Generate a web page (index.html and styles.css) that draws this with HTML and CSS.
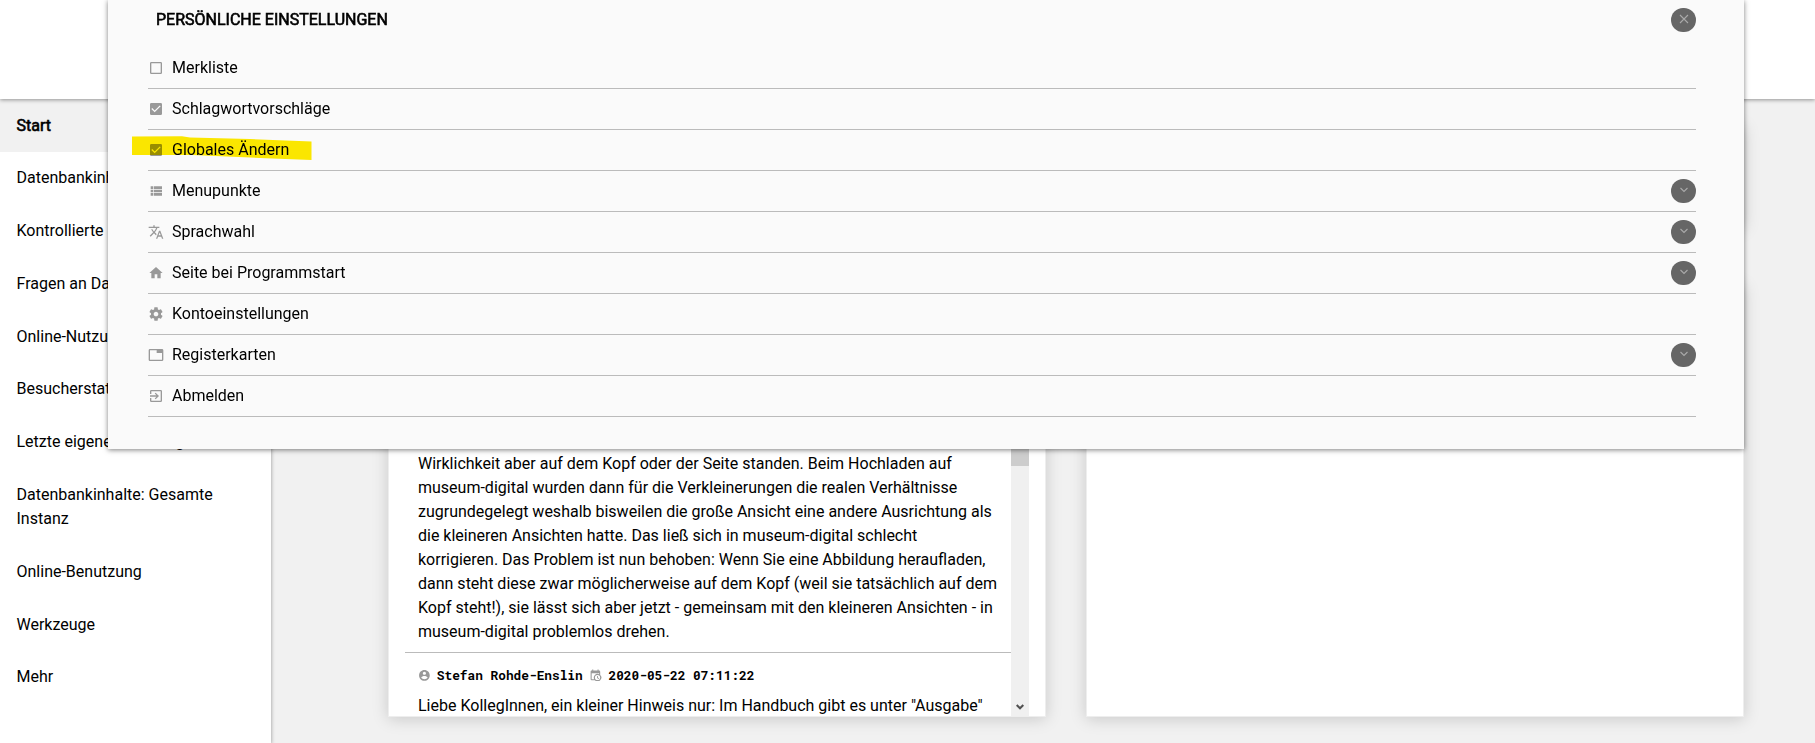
FILE: index.html
```html
<!DOCTYPE html>
<html lang="de">
<head>
<meta charset="utf-8">
<title>museum-digital</title>
<link rel="stylesheet" href="styles.css">
</head>
<body>
<header class="topbar"></header>
<div class="page">
  <nav class="sidebar">
    <a class="nav-item active">Start</a>
    <a class="nav-item">Datenbankinhalte</a>
    <a class="nav-item">Kontrollierte Listen</a>
    <a class="nav-item">Fragen an Datenbank</a>
    <a class="nav-item">Online-Nutzung</a>
    <a class="nav-item">Besucherstatistik</a>
    <a class="nav-item">Letzte eigene Änderungen</a>
    <a class="nav-item">Datenbankinhalte: Gesamte Instanz</a>
    <a class="nav-item">Online-Benutzung</a>
    <a class="nav-item">Werkzeuge</a>
    <a class="nav-item">Mehr</a>
  </nav>
  <main class="content">
    <section class="card summary"></section>
    <section class="card news">
      <div class="feed">
        <p class="post">Wirklichkeit aber auf dem Kopf oder der Seite standen. Beim Hochladen auf<br>museum-digital wurden dann für die Verkleinerungen die realen Verhältnisse<br>zugrundegelegt weshalb bisweilen die große Ansicht eine andere Ausrichtung als<br>die kleineren Ansichten hatte. Das ließ sich in museum-digital schlecht<br>korrigieren. Das Problem ist nun behoben: Wenn Sie eine Abbildung heraufladen,<br>dann steht diese zwar möglicherweise auf dem Kopf (weil sie tatsächlich auf dem<br>Kopf steht!), sie lässt sich aber jetzt - gemeinsam mit den kleineren Ansichten - in<br>museum-digital problemlos drehen.</p>
        <div class="meta">
          <svg class="meta-icon" viewBox="0 0 24 24"><path d="M12 2C6.480 2 2 6.480 2 12s4.480 10 10 10 10-4.480 10-10S17.520 2 12 2zm0 3c1.660 0 3 1.340 3 3s-1.340 3-3 3-3-1.340-3-3 1.340-3 3-3zm0 14.200c-2.500 0-4.710-1.280-6-3.220.030-1.990 4-3.080 6-3.080 1.990 0 5.970 1.090 6 3.080-1.290 1.940-3.500 3.220-6 3.220z"/></svg>
          <span class="author">Stefan Rohde-Enslin</span>
          <svg class="meta-icon" viewBox="0 0 24 24"><path d="M15 13h1.500v2.820l2.440 1.410-.750 1.300L15 16.690V13zm4-5H5v11h4.670A7 7 0 0 1 19 9.670V8zM5 21a2 2 0 0 1-2-2V5c0-1.110.890-2 2-2h1V1h2v2h8V1h2v2h1a2 2 0 0 1 2 2v6.100A7 7 0 0 1 11.100 21H5zm11-9.850A4.850 4.850 0 1 0 16 20.850 4.850 4.850 0 0 0 16 11.150z"/></svg>
          <span class="date">2020-05-22 07:11:22</span>
        </div>
        <p class="post next">Liebe KollegInnen, ein kleiner Hinweis nur: Im Handbuch gibt es unter "Ausgabe"</p>
      </div>
      <div class="scrollbar"><div class="thumb"></div><svg class="scroll-arrow" viewBox="0 0 8 6"><path d="M.700 1 4 4.300 7.300 1"/></svg></div>
    </section>
    <section class="card empty"></section>
  </main>
</div>
<div class="dialog">
  <div class="dialog-head"><h2>PERSÖNLICHE EINSTELLUNGEN</h2><span class="round"><svg viewBox="0 0 12 12"><path d="M2 2l8 8M10 2l-8 8"/></svg></span></div>
  <ul class="options">
    <li><svg class="ico" viewBox="0 0 24 24"><path d="M19 5v14H5V5h14m0-2H5a2 2 0 0 0-2 2v14a2 2 0 0 0 2 2h14a2 2 0 0 0 2-2V5a2 2 0 0 0-2-2z"/></svg>Merkliste</li>
    <li><svg class="ico" viewBox="0 0 24 24"><path d="M19 3H5a2 2 0 0 0-2 2v14a2 2 0 0 0 2 2h14a2 2 0 0 0 2-2V5a2 2 0 0 0-2-2zm-9 14l-5-5 1.410-1.410L10 14.170l7.590-7.590L19 8l-9 9z"/></svg>Schlagwortvorschläge</li>
    <li><svg class="ico" viewBox="0 0 24 24"><path d="M19 3H5a2 2 0 0 0-2 2v14a2 2 0 0 0 2 2h14a2 2 0 0 0 2-2V5a2 2 0 0 0-2-2zm-9 14l-5-5 1.410-1.410L10 14.170l7.590-7.590L19 8l-9 9z"/></svg>Globales Ändern
      <svg class="marker" viewBox="0 0 180 25"><path d="M0 .500L50 .200 58 1.500 118 3 179.500 5.500V24L140 22.500 60 19 0 19z"/></svg></li>
    <li><svg class="ico" viewBox="0 0 24 24"><path d="M4 14h4v-4H4v4zm0 5h4v-4H4v4zM4 9h4V5H4v4zm5 5h12v-4H9v4zm0 5h12v-4H9v4zM9 5v4h12V5H9z"/></svg>Menupunkte<span class="round"><svg viewBox="0 0 12 12"><path d="M2.500 4L6 7.500 9.500 4"/></svg></span></li>
    <li><svg class="ico" viewBox="0 0 24 24"><path d="M12.870 15.070l-2.540-2.510.030-.030A17.500 17.500 0 0 0 14.070 6H17V4h-7V2H8v2H1v2h11.170C11.500 7.920 10.440 9.750 9 11.350 8.070 10.320 7.300 9.190 6.690 8h-2c.730 1.630 1.730 3.170 2.980 4.560l-5.090 5.020L4 19l5-5 3.110 3.110.760-2.040zM18.500 10h-2L12 22h2l1.120-3h4.750L21 22h2l-4.500-12zm-2.620 7l1.620-4.330L19.120 17h-3.240z"/></svg>Sprachwahl<span class="round"><svg viewBox="0 0 12 12"><path d="M2.500 4L6 7.500 9.500 4"/></svg></span></li>
    <li><svg class="ico" viewBox="0 0 24 24"><path d="M10 20v-6h4v6h5v-8h3L12 3 2 12h3v8z"/></svg>Seite bei Programmstart<span class="round"><svg viewBox="0 0 12 12"><path d="M2.500 4L6 7.500 9.500 4"/></svg></span></li>
    <li><svg class="ico" viewBox="0 0 24 24"><path d="M19.430 12.980c.040-.320.070-.640.070-.980s-.030-.660-.070-.980l2.110-1.650c.190-.150.240-.420.120-.640l-2-3.460c-.120-.220-.390-.300-.610-.220l-2.490 1c-.520-.400-1.080-.730-1.690-.980l-.380-2.650A.488.488 0 0 0 14 2h-4c-.250 0-.460.180-.490.420l-.380 2.650c-.610.250-1.170.590-1.690.980l-2.490-1c-.230-.090-.490 0-.610.220l-2 3.460c-.130.220-.070.490.120.640l2.110 1.650c-.040.320-.070.650-.070.980s.030.660.070.980l-2.110 1.650c-.190.150-.240.420-.120.640l2 3.460c.120.220.390.300.610.220l2.490-1c.520.400 1.080.730 1.690.980l.380 2.650c.030.240.240.420.490.420h4c.250 0 .460-.180.490-.420l.380-2.650c.610-.250 1.170-.590 1.690-.980l2.490 1c.230.090.490 0 .610-.220l2-3.460c.120-.220.070-.490-.120-.640l-2.110-1.650zM12 15.500c-1.930 0-3.500-1.570-3.500-3.500s1.570-3.500 3.500-3.500 3.500 1.570 3.500 3.500-1.570 3.500-3.500 3.500z"/></svg>Kontoeinstellungen</li>
    <li><svg class="ico" viewBox="0 0 24 24"><path d="M21 3H3a2 2 0 0 0-2 2v14c0 1.100.900 2 2 2h18a2 2 0 0 0 2-2V5a2 2 0 0 0-2-2zm0 16H3V5h10v4h8v10z"/></svg>Registerkarten<span class="round"><svg viewBox="0 0 12 12"><path d="M2.500 4L6 7.500 9.500 4"/></svg></span></li>
    <li><svg class="ico" viewBox="0 0 24 24"><path d="M10.090 15.590L11.500 17l5-5-5-5-1.410 1.410L12.670 11H3v2h9.670l-2.580 2.590zM19 3H5a2 2 0 0 0-2 2v4h2V5h14v14H5v-4H3v4a2 2 0 0 0 2 2h14a2 2 0 0 0 2-2V5a2 2 0 0 0-2-2z"/></svg>Abmelden</li>
  </ul>
</div>
</body>
</html>
```
FILE: styles.css
```css
* { box-sizing: border-box; }
body {
  margin: 0;
  height: 743px;
  overflow: hidden;
  display: flex;
  flex-direction: column;
  background: #f1f1f1;
  color: #000;
  font: 16px/24px Roboto, "Noto Sans", sans-serif;
}
.topbar {
  position: relative;
  z-index: 2;
  flex: none;
  height: 99px;
  background: #fff;
  box-shadow: 0 1px 4px rgba(0, 0, 0, .4);
}
.page { flex: 1; display: flex; min-height: 0; }
.sidebar {
  flex: none;
  width: 271px;
  padding-top: .2px;
  background: #fff;
  box-shadow: 0 1px 4px rgba(0, 0, 0, .4);
}
.nav-item { display: block; padding: 14.400px 16.500px; }
.nav-item.active { background: #f1f1f1; -webkit-text-stroke: .6px #000; }
.content {
  flex: 1;
  display: grid;
  grid-template-columns: 658px 658px;
  grid-template-rows: 102px 433px;
  gap: 57px 40px;
  padding: 26px 0 0 117px;
}
.card {
  border: 1px solid #eee;
  background: #fff;
  box-shadow: 0 2px 15px rgba(0, 0, 0, .17);
}
.summary { grid-column: 1 / 3; }
.news { display: flex; padding: 0 16px; overflow: hidden; }
.feed { flex: 1; display: flex; flex-direction: column; justify-content: flex-end; }
.post { margin: 0; padding: 0 13px 8px; white-space: nowrap; }
.post.next { padding-bottom: 0; margin-bottom: -2px; }
.meta {
  display: flex;
  align-items: center;
  height: 42px;
  padding: 3px 13px 0;
  border-top: 1px solid #bbb;
  font: bold 12.800px/24px "Roboto Mono", "DejaVu Sans Mono", monospace;
}
.meta-icon { width: 12.800px; height: 12.800px; fill: #999; }
.author { margin: 0 6px; }
.date { margin-left: 7px; }
.scrollbar {
  position: relative;
  width: 18px;
  background: #f0f0f0;
}
.thumb { height: 181px; background: #cdcdcd; }
.scroll-arrow {
  position: absolute;
  left: 5px;
  bottom: 6px;
  width: 8px;
  height: 6px;
  fill: none;
  stroke: #505050;
  stroke-width: 2;
}
.dialog {
  position: absolute;
  z-index: 5;
  left: 108px;
  top: 0;
  width: 1636px;
  height: 449px;
  padding: 0 48px 0 40px;
  background: #fafafa;
  box-shadow: 0 1px 5px rgba(0, 0, 0, .5);
}
.dialog-head {
  display: flex;
  align-items: center;
  justify-content: space-between;
  height: 40px;
  padding: 0 0 0 8px;
}
.dialog-head h2 {
  margin: 0;
  font-size: 16px;
  line-height: 24px;
  font-weight: 400;
  -webkit-text-stroke: .6px #000;
}
.options { margin: 0; padding: 8px 0 0; list-style: none; }
.options li {
  position: relative;
  display: flex;
  align-items: center;
  height: 41px;
  border-bottom: 1px solid #bbb;
}
.ico { width: 16px; height: 16px; margin-right: 8px; fill: #999; }
.round {
  display: flex;
  justify-content: center;
  width: 25px;
  height: 24px;
  margin-left: auto;
  padding-top: 5px;
  border-radius: 12px;
  background: #666;
}
.round svg { width: 12px; height: 12px; fill: none; stroke: #aaa; stroke-width: 1.100; }
.marker {
  position: absolute;
  left: -16px;
  top: 6px;
  width: 180px;
  height: 25px;
  fill: #ffeb00;
  mix-blend-mode: multiply;
}
```
